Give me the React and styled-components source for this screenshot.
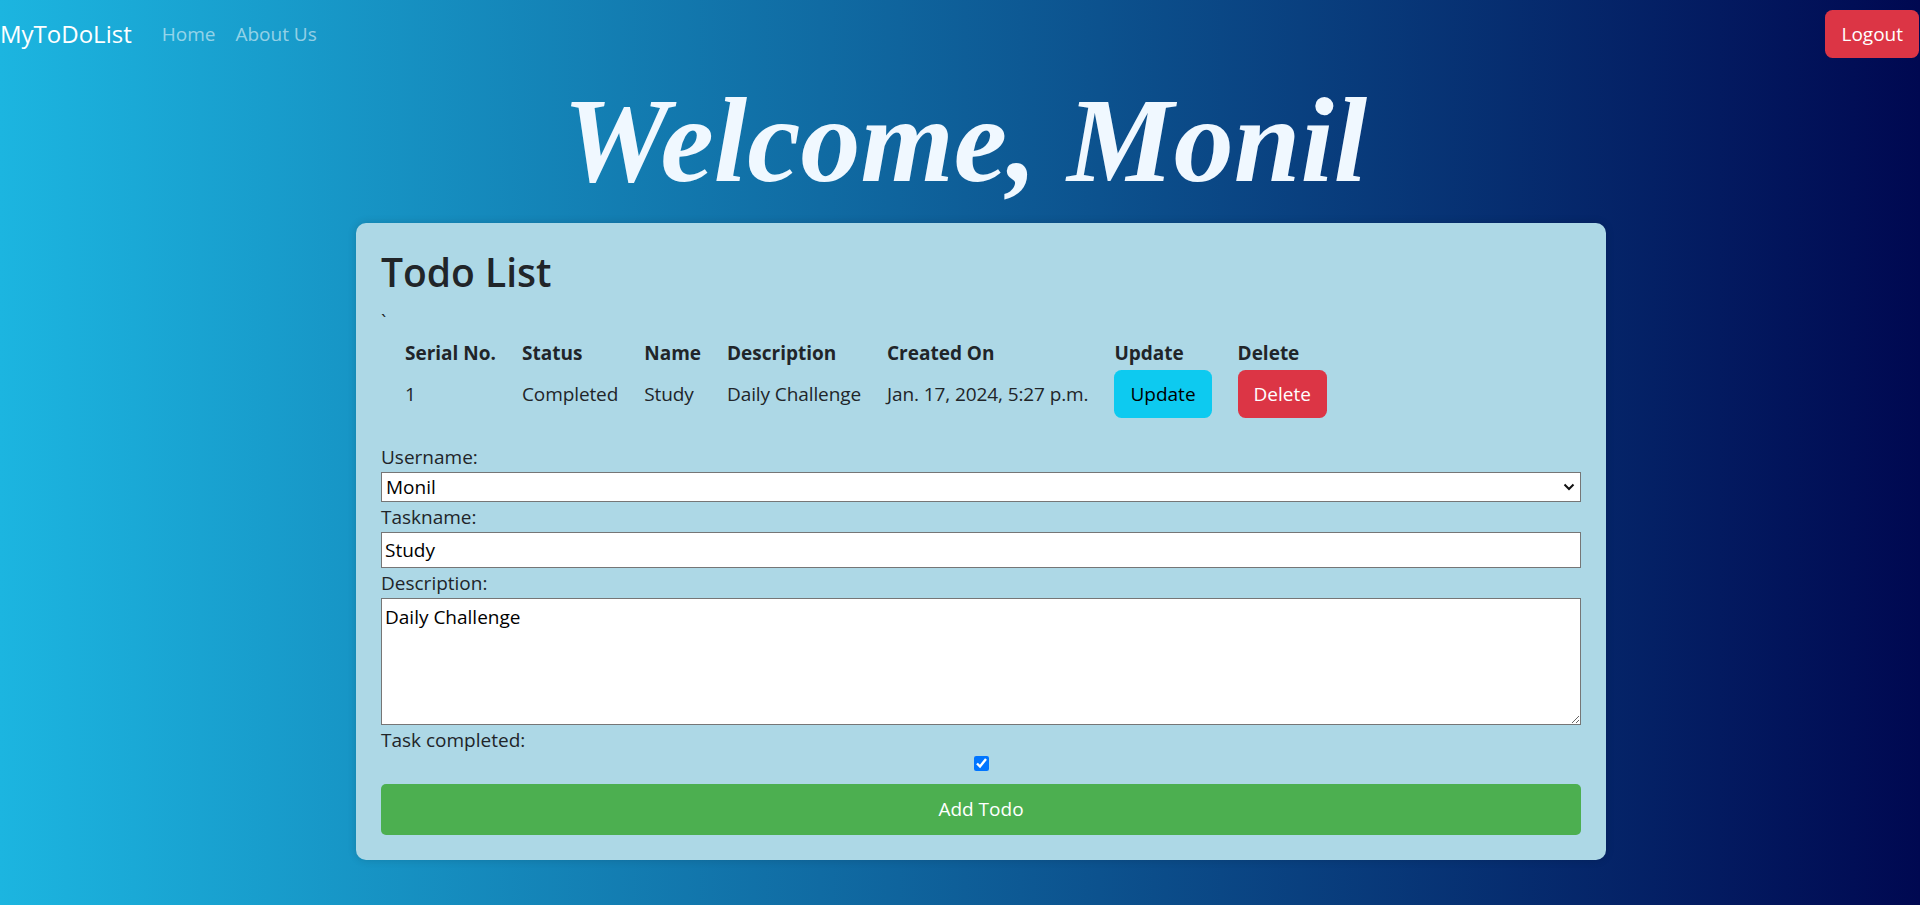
import React from 'react'
import styled, { createGlobalStyle } from 'styled-components'

const GlobalStyle = createGlobalStyle`
  * { box-sizing: border-box; }
  html, body {
    margin: 0;
    min-height: 100vh;
  }
  body {
    font-family: "Open Sans", "Noto Sans", sans-serif;
    font-size: 19px;
    line-height: 30px;
    color: #212529;
    background: linear-gradient(to right, #1cb5e0, #000851);
  }
`

const Page = styled.div`
  min-height: 100vh;
`

const Navbar = styled.nav`
  display: flex;
  align-items: center;
  justify-content: space-between;
  padding: 9px 1px 10px 0;
`

const NavLeft = styled.div`
  display: flex;
  align-items: center;
`

const Brand = styled.a`
  font-size: 24px;
  line-height: 1.5;
  color: #fff;
  padding: 6px 0;
  margin-right: 20px;
  text-decoration: none;
`

const NavLink = styled.a`
  font-size: 19px;
  color: rgba(255, 255, 255, 0.55);
  padding: 10px;
  text-decoration: none;
`

const Button = styled.button`
  font-family: inherit;
  font-size: 19px;
  line-height: 32.5px;
  padding: 7.5px 16px;
  border: 0;
  border-radius: 7.5px;
  cursor: pointer;
  background: ${props => (props.variant === 'info' ? '#0dcaf0' : '#dc3545')};
  color: ${props => (props.variant === 'info' ? '#000' : '#fff')};
`

const Welcome = styled.h1`
  margin: 0 0 10px;
  padding-left: 10px;
  text-align: center;
  font-family: "Liberation Serif", "Times New Roman", serif;
  font-style: italic;
  font-weight: 700;
  font-size: 120px;
  line-height: 1.2;
  color: #f0f8ff;
`

const Main = styled.main`
  padding-left: 42px;
`

const Card = styled.section`
  width: 1250px;
  margin: 0 auto;
  padding: 25px;
  background: #add8e6;
  border-radius: 10px;
  box-shadow: 0 0 8px rgba(0, 0, 0, 0.15);
`

const CardTitle = styled.h2`
  margin: 0 0 10px;
  font-size: 39px;
  font-weight: 600;
  line-height: 48px;
`

const Stray = styled.div`
  line-height: 30px;
`

const Table = styled.table`
  margin-left: 10px;
  border-spacing: 2.5px;
`

const Th = styled.th`
  text-align: left;
  padding: 0 12px;
  font-weight: 700;
  white-space: nowrap;
  width: ${props => props.w}px;
`

const Td = styled.td`
  padding: 0 12px;
  white-space: nowrap;
  letter-spacing: -0.1px;
`

const Form = styled.form`
  margin-top: 22px;
`

const Label = styled.label`
  display: block;
  line-height: 30px;
`

const SelectWrap = styled.div`
  position: relative;
`

const Select = styled.select`
  appearance: none;
  width: 100%;
  height: 30px;
  padding: 0 4px;
  border: 1px solid #767676;
  border-radius: 0;
  background: #fff;
  font-family: inherit;
  font-size: 19px;
  color: #000;
`

const Chevron = styled.svg`
  position: absolute;
  right: 6px;
  top: 9px;
  pointer-events: none;
`

const Input = styled.input`
  display: block;
  width: 100%;
  height: 36px;
  padding: 0 3px;
  border: 1px solid #767676;
  background: #fff;
  font-family: inherit;
  font-size: 19px;
  color: #000;
`

const TextArea = styled.textarea`
  display: block;
  width: 100%;
  height: 127px;
  padding: 3px 3px;
  border: 1px solid #767676;
  background: #fff;
  font-family: inherit;
  font-size: 19px;
  line-height: 30px;
  color: #000;
  resize: vertical;
`

const CheckRow = styled.div`
  display: flex;
  justify-content: center;
  padding-top: 1px;
`

const Check = styled.input`
  width: 15px;
  height: 15px;
  margin: 0;
`

const AddButton = styled.button`
  display: block;
  width: 100%;
  height: 51px;
  margin-top: 13px;
  border: 0;
  border-radius: 5px;
  background: #4caf50;
  color: #fff;
  font-family: inherit;
  font-size: 19px;
  cursor: pointer;
`

const columns = [
  { label: 'Serial No.', w: 90 },
  { label: 'Status', w: 96 },
  { label: 'Name', w: 55 },
  { label: 'Description', w: 136 },
  { label: 'Created On', w: 201 },
  { label: 'Update', w: 96 },
  { label: 'Delete', w: 88 },
]

const todos = [
  { id: 1, status: 'Completed', name: 'Study', description: 'Daily Challenge', created: 'Jan. 17, 2024, 5:27 p.m.' },
]

export default function App() {
  return (
    <Page>
      <GlobalStyle />
      <Navbar>
        <NavLeft>
          <Brand href="#">MyToDoList</Brand>
          <NavLink href="#">Home</NavLink>
          <NavLink href="#">About Us</NavLink>
        </NavLeft>
        <Button>Logout</Button>
      </Navbar>

      <Welcome>Welcome, Monil</Welcome>

      <Main>
        <Card>
          <CardTitle>Todo List</CardTitle>
          <Stray>`</Stray>
          <Table>
            <thead>
              <tr>
                {columns.map(col => (
                  <Th key={col.label} w={col.w}>{col.label}</Th>
                ))}
              </tr>
            </thead>
            <tbody>
              {todos.map(todo => (
                <tr key={todo.id}>
                  <Td>{todo.id}</Td>
                  <Td>{todo.status}</Td>
                  <Td>{todo.name}</Td>
                  <Td>{todo.description}</Td>
                  <Td>{todo.created}</Td>
                  <Td><Button variant="info">Update</Button></Td>
                  <Td><Button>Delete</Button></Td>
                </tr>
              ))}
            </tbody>
          </Table>

          <Form onSubmit={e => e.preventDefault()}>
            <Label>Username:</Label>
            <SelectWrap>
              <Select defaultValue="Monil">
                <option>Monil</option>
              </Select>
              <Chevron width="12" height="12" viewBox="0 0 12 12">
                <path d="M1.5 3.5 L6 8 L10.5 3.5" fill="none" stroke="#111" strokeWidth="2" />
              </Chevron>
            </SelectWrap>
            <Label>Taskname:</Label>
            <Input defaultValue="Study" />
            <Label>Description:</Label>
            <TextArea defaultValue="Daily Challenge" />
            <Label>Task completed:</Label>
            <CheckRow>
              <Check type="checkbox" defaultChecked />
            </CheckRow>
            <AddButton type="submit">Add Todo</AddButton>
          </Form>
        </Card>
      </Main>
    </Page>
  )
}
